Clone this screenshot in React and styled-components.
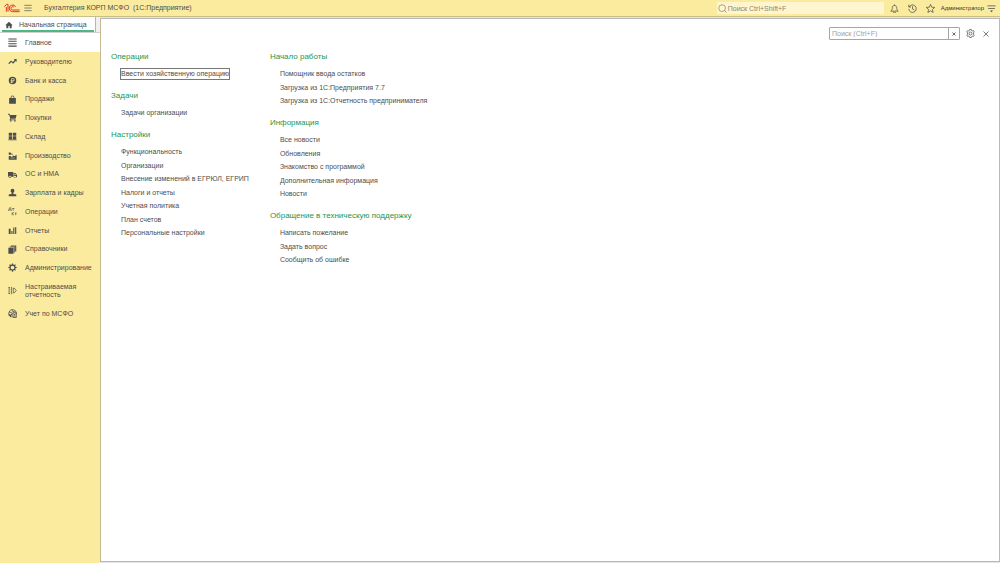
import React, { useState } from "react"
import styled, { createGlobalStyle } from "styled-components"

const GlobalStyle = createGlobalStyle`
  html,
  body,
  #root {
    height: 100%;
  }

  body {
    background: #fbeb9e;
    color: #4d4d4d;
    font-family: "Liberation Sans", Arial, sans-serif;
    font-size: 7px;
    margin: 0;
  }

  * {
    box-sizing: border-box;
  }

  button,
  input {
    color: inherit;
    font: inherit;
  }
`

const Page = styled.div`
  display: flex;
  flex-direction: column;
  height: 100%;
  overflow: hidden;
`

const TopBar = styled.header`
  align-items: center;
  border-bottom: 1px solid #c9bf8c;
  display: flex;
  flex: none;
  height: 17px;
  padding: 0 2px 0 4px;
`

const Title = styled.h1`
  flex: 1;
  font-size: 7px;
  font-weight: normal;
  line-height: 10px;
  margin: 0 0 0 8px;
  white-space: pre;
`

const Icon = styled.svg`
  display: block;
  fill: ${props => (props.$line ? "none" : "currentColor")};
  flex: none;
  height: ${props => props.$size || 9}px;
  stroke: ${props => (props.$line ? "currentColor" : "none")};
  stroke-width: ${props => props.$line || 0};
  width: ${props => props.$width || props.$size || 9}px;
`

const IconButton = styled.button`
  align-items: center;
  background: none;
  border: none;
  cursor: pointer;
  display: flex;
  flex: none;
  height: 12px;
  justify-content: center;
  padding: 0;
  width: ${props => props.$width || 18}px;
`

const GlobalSearch = styled.label`
  align-items: center;
  background: #fff6cf;
  color: #8b8672;
  display: flex;
  height: 12px;
  margin-right: 2px;
  padding-left: 1px;
  width: 167px;
`

const SearchInput = styled.input`
  background: none;
  border: none;
  flex: 1;
  min-width: 0;
  outline: none;
  padding: 0 2px;

  &::placeholder {
    color: ${props => props.$hint};
    opacity: 1;
  }
`

const GlobalSearchInput = styled(SearchInput)`
  padding: 0 1px;
`

const UserButton = styled.button`
  background: none;
  border: none;
  color: #333;
  cursor: pointer;
  font-size: 6px;
  line-height: 10px;
  padding: 0 0 0 1px;
`

const Body = styled.div`
  background: #e4e4e4;
  display: flex;
  flex: 1;
  min-height: 0;
`

const Side = styled.div`
  background: #fbeb9e;
  display: flex;
  flex: none;
  flex-direction: column;
  width: 100px;
`

const TabStrip = styled.div`
  background: #f0f0f0;
  border-bottom: 1px solid #d0d0d0;
  height: 16px;
  padding-right: 4px;
`

const HomeTab = styled.a`
  align-items: center;
  background: white;
  border-right: 1px solid #b5b5b5;
  color: inherit;
  display: flex;
  gap: 6px;
  height: 15px;
  padding-left: 5px;
  position: relative;
  text-decoration: none;

  &::after {
    background: #4fb783;
    bottom: 0;
    content: "";
    height: 2px;
    left: 2px;
    position: absolute;
    right: 1px;
  }
`

const Nav = styled.nav`
  display: flex;
  flex-direction: column;
`

const NavLink = styled.a`
  align-items: center;
  background: ${props => (props.$active ? "white" : "none")};
  color: inherit;
  display: flex;
  gap: 8px;
  line-height: 8px;
  min-height: ${props => (props.$tall ? 27 : 19)}px;
  padding-left: 8px;
  text-decoration: none;
  white-space: pre-line;

  &:nth-child(4n) {
    min-height: 18px;
  }
`

const Panel = styled.main`
  background: white;
  border: 1px solid #b9b9b9;
  border-left-color: #c4b992;
  flex: 1;
  margin: 1px 0 1px;
  min-width: 0;
`

const PanelBar = styled.div`
  align-items: center;
  display: flex;
  height: 13px;
  justify-content: flex-end;
  margin: 8px 6px 11px;
`

const PanelSearch = styled.div`
  border: 1px solid #a6a6a6;
  border-radius: 1px;
  display: flex;
  height: 13px;
  margin-right: 1px;
  width: 131px;
`

const ClearButton = styled.button`
  align-items: center;
  background: none;
  border: none;
  border-left: 1px solid #a6a6a6;
  cursor: pointer;
  display: flex;
  justify-content: center;
  padding: 0;
  width: 11px;
`

const Columns = styled.div`
  column-gap: 20px;
  display: grid;
  grid-template-columns: max-content max-content;
  padding-left: 10px;
`

const Column = styled.div`
  display: flex;
  flex-direction: column;
  gap: 9px;
`

const GroupTitle = styled.h2`
  color: #23954f;
  font-size: 8px;
  font-weight: normal;
  line-height: 12px;
  margin: 0 0 4px;
`

const LinkList = styled.ul`
  list-style: none;
  margin: 0;
  padding: 0 0 0 9px;
`

const LinkRow = styled.li`
  align-items: center;
  display: flex;
  height: 14px;

  &:nth-child(even) {
    height: 13px;
  }
`

const CommandLink = styled.a`
  border: 1px solid ${props => (props.$focused ? "#777" : "transparent")};
  color: inherit;
  line-height: 10px;
  text-decoration: none;
`

const glyphs = {
  main: <path d="M1 1h22v3H1zM1 7.300h22v3H1zM1 13.700h22v3H1zM1 20h22v3H1z" />,
  trend: (
    <path d="M1 16.500 8 9l5 4 5-5-2.500-2.500H23V13l-2.500-2.500L13.500 18 8.500 13.500 3 19z" />
  ),
  bank: (
    <path
      fillRule="evenodd"
      d="M12 2a10 10 0 1 0 0 20 10 10 0 0 0 0-20zM9 6h4.500a4 4 0 0 1 0 8H11v1.200h3V17h-3v2H9v-2H7v-1.800h2V14H7v-2h2zm2 2v4h2.500a2 2 0 0 0 0-4z"
    />
  ),
  bag: (
    <path
      fillRule="evenodd"
      d="M3 8h4V6a5 5 0 0 1 10 0v2h4v15H3zm6 0h6V6a3 3 0 0 0-6 0z"
    />
  ),
  cart: (
    <path d="M0 2h4l1.500 3H23l-3 10H8L7 17h14v2H4l2-5L3 4.500H0zM7.500 19.500a2 2 0 1 1 0 4 2 2 0 0 1 0-4zM18.500 19.500a2 2 0 1 1 0 4 2 2 0 0 1 0-4z" />
  ),
  stock: <path d="M2 2h9v8H2zM13 2h9v8h-9zM2 11.500h9V19H2zM13 11.500h9V19h-9zM1 20h22v2H1z" />,
  factory: (
    <path
      fillRule="evenodd"
      d="M2 23V13h4l4 3 5-4 2 2 6-4v13zM2 10V4h5l2 3h4v2H8l-3 1zM7 18v1h11v-1z"
    />
  ),
  truck: (
    <path
      fillRule="evenodd"
      d="M0 5h14v13H0zM15 8h5l4 5v6h-9zm2 2v3h4l-2-3zM5 15a3 3 0 1 1 0 6 3 3 0 0 1 0-6zM18.500 15a3 3 0 1 1 0 6 3 3 0 0 1 0-6z"
    />
  ),
  person: (
    <path d="M12 2a5 5 0 0 1 5 5c0 2.500-1.500 4.500-3 5.500V15l8 2v5H2v-5l8-2v-2.500C8.500 11.500 7 9.500 7 7a5 5 0 0 1 5-5z" />
  ),
  debit: (
    <path
      fill="none"
      stroke="currentColor"
      strokeWidth="1.700"
      d="M1 10V8h8v2M2.500 8 4 2h3.500v6M11 4h6M14 4v6M11 14v8M16 14l-4.500 4 4.500 4M18 16h5M20.500 16v6"
    />
  ),
  chart: <path d="M2 7h5v14H2zM9 13h3v8H9zM14 4h3v17h-3zM19 3h3v18h-3z" />,
  books: <path d="M1 7h14v16H1zM4 4h14v16h-2V6H4zM8 1h14v16h-3V3H8z" />,
  gear: (
    <path
      fillRule="evenodd"
      d="M10.500 1h3l.6 3.200 2 .9 2.700-1.900 2.100 2.100L19 8l.9 2 3.100.5v3l-3.100.5-.9 2 1.900 2.700-2.100 2.100-2.700-1.900-2 .9-.6 3.200h-3l-.6-3.200-2-.9-2.700 1.900-2.100-2.100L5 16l-.9-2-3.100-.5v-3l3.100-.5L5 8 3.100 5.300l2.100-2.100 2.700 1.900 2-.9zM12 7a5 5 0 1 0 0 10 5 5 0 0 0 0-10z"
    />
  ),
  custom: (
    <path
      fill="none"
      stroke="currentColor"
      strokeWidth="2"
      d="M3 4v16M1 4h4M1 20h4M9 2v20M14 5v14M14 6h3l5 6-5 6h-3"
    />
  ),
  ifrs: (
    <>
      <path
        fill="none"
        stroke="currentColor"
        strokeWidth="2.200"
        d="M9 21.500A10 10 0 1 1 22 14M3 8l6 1 2 4-3 3v5M11 3l2 4 7 1"
      />
      <path
        fillRule="evenodd"
        d="M12 9h11v14H12zm2.500 2.500v9h6v-9zM3 13l6 2-2 6-4-4z"
      />
      <path d="M16 13h3v2h-3zM16 17h3v2h-3z" />
    </>
  ),
}

const navItems = [
  { icon: "main", title: "Главное" },
  { icon: "trend", title: "Руководителю" },
  { icon: "bank", title: "Банк и касса" },
  { icon: "bag", title: "Продажи" },
  { icon: "cart", title: "Покупки" },
  { icon: "stock", title: "Склад" },
  { icon: "factory", title: "Производство" },
  { icon: "truck", title: "ОС и НМА" },
  { icon: "person", title: "Зарплата и кадры" },
  { icon: "debit", title: "Операции" },
  { icon: "chart", title: "Отчеты" },
  { icon: "books", title: "Справочники" },
  { icon: "gear", title: "Администрирование" },
  { icon: "custom", title: "Настраиваемая\nотчетность", tall: true },
  { icon: "ifrs", title: "Учет по МСФО" },
]

const columns = [
  [
    { title: "Операции", links: ["Ввести хозяйственную операцию"] },
    { title: "Задачи", links: ["Задачи организации"] },
    {
      title: "Настройки",
      links: [
        "Функциональность",
        "Организации",
        "Внесение изменений в ЕГРЮЛ, ЕГРИП",
        "Налоги и отчеты",
        "Учетная политика",
        "План счетов",
        "Персональные настройки",
      ],
    },
  ],
  [
    {
      title: "Начало работы",
      links: [
        "Помощник ввода остатков",
        "Загрузка из 1С:Предприятия 7.7",
        "Загрузка из 1С:Отчетность предпринимателя",
      ],
    },
    {
      title: "Информация",
      links: [
        "Все новости",
        "Обновления",
        "Знакомство с программой",
        "Дополнительная информация",
        "Новости",
      ],
    },
    {
      title: "Обращение в техническую поддержку",
      links: ["Написать пожелание", "Задать вопрос", "Сообщить об ошибке"],
    },
  ],
]

const Logo = () => (
  <Icon viewBox="0 0 48 30" $size={10} $width={16} $line={3} color="#e0332a">
    <path d="M1 11l7-7h4v22M7 12v14" />
    <path d="M35 12a10 10 0 1 0-9 14h21" />
    <path d="M30 13a5 5 0 1 0-4 8h21" />
  </Icon>
)

export default () => {
  const [section, setSection] = useState("Главное")
  const [query, setQuery] = useState("")

  return (
    <Page>
      <GlobalStyle />
      <TopBar>
        <Logo />
        <IconButton aria-label="Меню" $width={16}>
          <Icon viewBox="0 0 24 24" $size={8} $line={2}>
            <path d="M1 4h22M1 12h22M1 20h22" />
          </Icon>
        </IconButton>
        <Title>Бухгалтерия КОРП МСФО  (1С:Предприятие)</Title>
        <GlobalSearch>
          <Icon viewBox="0 0 24 24" $line={2}>
            <circle cx="11" cy="11" r="9" />
            <path d="M17 17l6 6" />
          </Icon>
          <GlobalSearchInput
            aria-label="Поиск"
            $hint="#8b8672"
            placeholder="Поиск Ctrl+Shift+F"
          />
        </GlobalSearch>
        <IconButton aria-label="Уведомления">
          <Icon viewBox="0 0 24 24" $line={2}>
            <path d="M2 19c3-2 4-5 4-9 0-4 3-6 6-6s6 2 6 6c0 4 1 7 4 9zM12 4V1M9 21a3 3 0 0 0 6 0" />
          </Icon>
        </IconButton>
        <IconButton aria-label="История">
          <Icon viewBox="0 0 24 24" $line={2}>
            <path d="M3 8a10 10 0 1 1-1 5M2 2v6h6M12 6v7l5 3" />
          </Icon>
        </IconButton>
        <IconButton aria-label="Избранное">
          <Icon viewBox="0 0 24 24" $line={2}>
            <path d="M12 1l3.200 7.500 8 .7-6 5.300 1.800 8-7-4.300-7 4.300 1.800-8-6-5.300 8-.7z" />
          </Icon>
        </IconButton>
        <UserButton>Администратор</UserButton>
        <IconButton aria-label="Настройки окна" $width={14}>
          <Icon viewBox="0 0 24 24" $line={2}>
            <path d="M1 5h22M3 12h18" />
            <path d="M8 17h8l-4 5z" fill="currentColor" stroke="none" />
          </Icon>
        </IconButton>
      </TopBar>
      <Body>
        <Side>
          <TabStrip>
            <HomeTab href="#home">
              <Icon viewBox="0 0 24 24" $size={8}>
                <path d="M12 2l11 11h-3v9h-6v-7h-4v7H4v-9H1z" />
              </Icon>
              Начальная страница
            </HomeTab>
          </TabStrip>
          <Nav>
            {navItems.map(item => (
              <NavLink
                $active={section === item.title}
                $tall={item.tall}
                href="#section"
                key={item.title}
                onClick={() => setSection(item.title)}
              >
                <Icon viewBox="0 0 24 24">{glyphs[item.icon]}</Icon>
                {item.title}
              </NavLink>
            ))}
          </Nav>
        </Side>
        <Panel>
          <PanelBar>
            <PanelSearch>
              <SearchInput
                aria-label="Поиск по разделу"
                $hint="#a0a0a0"
                onChange={evt => setQuery(evt.target.value)}
                placeholder="Поиск (Ctrl+F)"
                value={query}
              />
              <ClearButton aria-label="Очистить" onClick={() => setQuery("")}>
                <Icon viewBox="0 0 24 24" $size={4} $line={5}>
                  <path d="M3 3l18 18M21 3L3 21" />
                </Icon>
              </ClearButton>
            </PanelSearch>
            <IconButton aria-label="Настройка">
              <Icon viewBox="0 0 24 24" $line={2}>
                <path d="M10 1h4l1 3 2 1 3-.7 2 3.500L20 10v4l2 2.200-2 3.500-3-.7-2 1-1 3h-4l-1-3-2-1-3 .7-2-3.500L4 14v-4L2 7.800l2-3.500L7 5l2-1z" />
                <circle cx="12" cy="12" r="4" />
              </Icon>
            </IconButton>
            <IconButton aria-label="Закрыть" $width={14}>
              <Icon viewBox="0 0 24 24" $size={6} $line={3}>
                <path d="M2 2l20 20M22 2L2 22" />
              </Icon>
            </IconButton>
          </PanelBar>
          <Columns>
            {columns.map((groups, idx) => (
              <Column key={idx}>
                {groups.map(group => (
                  <section key={group.title}>
                    <GroupTitle>{group.title}</GroupTitle>
                    <LinkList>
                      {group.links.map(link => (
                        <LinkRow key={link}>
                          <CommandLink
                            $focused={link === "Ввести хозяйственную операцию"}
                            href="#command"
                          >
                            {link}
                          </CommandLink>
                        </LinkRow>
                      ))}
                    </LinkList>
                  </section>
                ))}
              </Column>
            ))}
          </Columns>
        </Panel>
      </Body>
    </Page>
  )
}
